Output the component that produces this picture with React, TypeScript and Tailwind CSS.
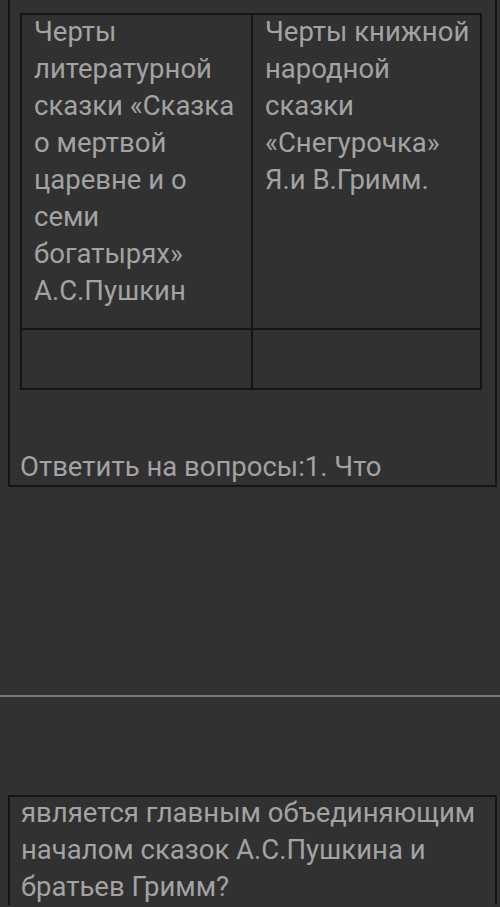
export default function App() {
  return (
    <div className="w-[500px] h-[907px] overflow-hidden bg-[#313131] font-['Roboto',sans-serif] text-[#a3a3a3]">
      <section className="h-[487px] ml-[8px] mr-[3px] border-l-2 border-r-2 border-b-2 border-[#151515] pl-[10px] pr-[13px] pt-[13px]">
        <div className="grid grid-cols-[231px_1fr] border-2 border-[#151515]">
          <div className="h-[315px] border-r-2 border-b-2 border-[#151515] pl-[12px] pr-[4px]">
            <p className="-mt-[2px] text-[27.5px] leading-[37px]">
              Черты литературной сказки «Сказка о мертвой царевне и о семи богатырях» А.С.Пушкин
            </p>
          </div>
          <div className="h-[315px] border-b-2 border-[#151515] pl-[12px] pr-[2px]">
            <p className="-mt-[2px] text-[27.5px] leading-[37px]">
              Черты книжной народной сказки «Снегурочка» Я.и В.Гримм.
            </p>
          </div>
          <div className="h-[58px] border-r-2 border-[#151515]" />
          <div className="h-[58px]" />
        </div>
        <p className="mt-[58px] text-[27.5px] leading-[37px]">Ответить на вопросы:1. Что</p>
      </section>
      <div className="h-[210px] border-b-2 border-[#7a7a7a]" />
      <div className="h-[98px]" />
      <section className="ml-[8px] mr-[3px] border-t-2 border-l-2 border-r-2 border-[#151515] pl-[11px]">
        <p className="-mt-[3px] text-[27.5px] leading-[37px]">
          является главным объединяющим началом сказок А.С.Пушкина и братьев Гримм?
        </p>
      </section>
    </div>
  );
}
